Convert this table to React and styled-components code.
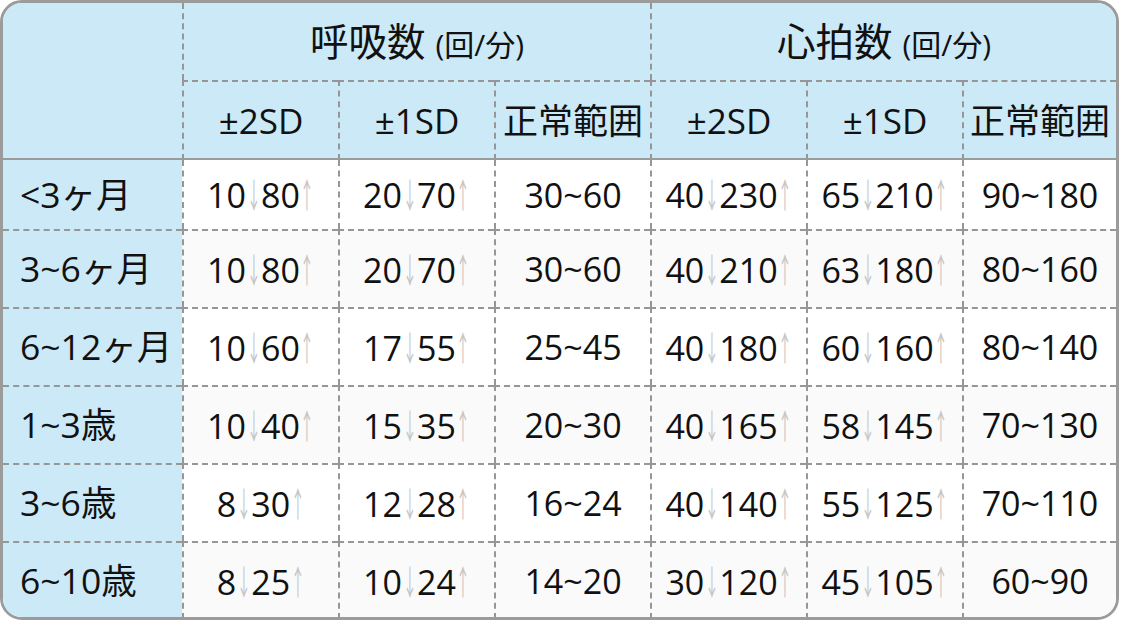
import React from 'react';
import styled, { createGlobalStyle } from 'styled-components';

const GlobalStyle = createGlobalStyle`
  html, body {
    margin: 0;
    padding: 0;
    background: #ffffff;
  }
  body {
    font-family: 'Open Sans', 'Noto Sans CJK JP', sans-serif;
    color: #111;
  }
`;

const groups = ['呼吸数', '心拍数'];
const subHeads = ['±2SD', '±1SD', '正常範囲'];

const rows = [
  { label: '<3ヶ月', resp: [[10, 80], [20, 70], '30~60'], heart: [[40, 230], [65, 210], '90~180'] },
  { label: '3~6ヶ月', resp: [[10, 80], [20, 70], '30~60'], heart: [[40, 210], [63, 180], '80~160'] },
  { label: '6~12ヶ月', resp: [[10, 60], [17, 55], '25~45'], heart: [[40, 180], [60, 160], '80~140'] },
  { label: '1~3歳', resp: [[10, 40], [15, 35], '20~30'], heart: [[40, 165], [58, 145], '70~130'] },
  { label: '3~6歳', resp: [[8, 30], [12, 28], '16~24'], heart: [[40, 140], [55, 125], '70~110'] },
  { label: '6~10歳', resp: [[8, 25], [10, 24], '14~20'], heart: [[30, 120], [45, 105], '60~90'] },
];

const dash = '2px dashed #969696';

const Frame = styled.div`
  width: 1119px;
  height: 620px;
  box-sizing: border-box;
  border: 3px solid #9b9b9b;
  border-radius: 22px;
  overflow: hidden;
  background: #fff;
`;

const Table = styled.table`
  width: 100%;
  border-collapse: separate;
  border-spacing: 0;
  table-layout: fixed;
  font-size: 34px;
  line-height: 1;
`;

const HeadRow = styled.tr`
  height: ${(p) => p.$h}px;
  background: #cce9f7;
`;

const HeadCell = styled.th`
  font-weight: 400;
  font-size: ${(p) => (p.$sub ? 35 : 38.5)}px;
  text-align: center;
  vertical-align: middle;
  padding: 0;
  border-left: ${dash};
  border-top: ${(p) => (p.$sub ? dash : 'none')};
  border-bottom: ${(p) => (p.$sub ? '2px solid #9b9b9b' : 'none')};
  white-space: nowrap;
`;

const Corner = styled.th`
  padding: 0;
  border-bottom: 2px solid #9b9b9b;
`;

const Unit = styled.span`
  font-size: 30px;
`;

const BodyRow = styled.tr`
  height: ${(p) => p.$h}px;
  background: ${(p) => (p.$alt ? '#fafafa' : '#ffffff')};
  & > * {
    border-top: ${(p) => (p.$first ? 'none' : dash)};
  }
`;

const RowLabel = styled.th`
  font-weight: 400;
  font-size: 35.5px;
  text-align: left;
  padding: 0 0 0 17px;
  background: #cce9f7;
  white-space: nowrap;
`;

const Cell = styled.td`
  text-align: center;
  vertical-align: middle;
  padding: 0;
  border-left: ${dash};
  white-space: nowrap;
`;

const Arrow = styled.span`
  display: inline-block;
  margin: 0 -9.5px;
  color: #c6c6c6;
  font-family: 'Noto Sans CJK JP', sans-serif;
  transform: scale(0.42, 1);
`;

const Range = ({ low, high }) => (
  <>
    {low}
    <Arrow>↓</Arrow>
    {high}
    <Arrow>↑</Arrow>
  </>
);

const renderCells = (vals) =>
  vals.map((v, i) => (
    <Cell key={i}>{Array.isArray(v) ? <Range low={v[0]} high={v[1]} /> : v}</Cell>
  ));

export default function App() {
  return (
    <>
      <GlobalStyle />
      <Frame>
        <Table>
          <colgroup>
            <col style={{ width: 179 }} />
            <col style={{ width: 156 }} />
            <col style={{ width: 156 }} />
            <col style={{ width: 156 }} />
            <col style={{ width: 156 }} />
            <col style={{ width: 156 }} />
            <col />
          </colgroup>
          <thead>
            <HeadRow $h={77}>
              <Corner rowSpan={2} />
              {groups.map((g) => (
                <HeadCell key={g} colSpan={3}>
                  {g} <Unit>(回/分)</Unit>
                </HeadCell>
              ))}
            </HeadRow>
            <HeadRow $h={80}>
              {[...subHeads, ...subHeads].map((s, i) => (
                <HeadCell key={i} $sub>
                  {s}
                </HeadCell>
              ))}
            </HeadRow>
          </thead>
          <tbody>
            {rows.map((r, i) => (
              <BodyRow
                key={r.label}
                $first={i === 0}
                $alt={i % 2 === 1}
                $h={i === 0 ? 69 : 78}
              >
                <RowLabel>{r.label}</RowLabel>
                {renderCells(r.resp)}
                {renderCells(r.heart)}
              </BodyRow>
            ))}
          </tbody>
        </Table>
      </Frame>
    </>
  );
}
